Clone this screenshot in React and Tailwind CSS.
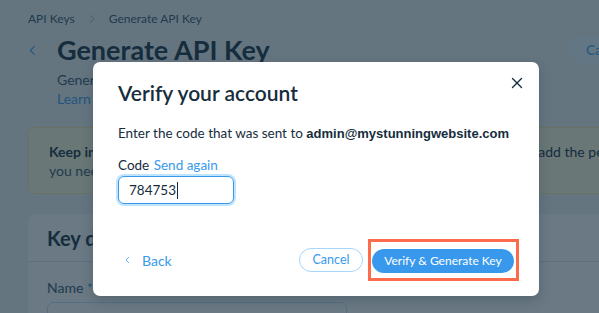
import React from 'react';

const Chevron = ({ dir = 'right', className = '' }) => (
  <svg viewBox="0 0 8 12" className={className} fill="none" stroke="currentColor" strokeWidth="1.3" strokeLinecap="round" strokeLinejoin="round">
    {dir === 'right' ? <path d="M2 1.5 L6.5 6 L2 10.5" /> : <path d="M6 1.5 L1.5 6 L6 10.5" />}
  </svg>
);

const App = () => {
  return (
    <div className="relative w-[599px] h-[313px] overflow-hidden bg-[#f0f4f7] text-[#162d3d] font-['Lato','Liberation_Sans',sans-serif]">
      {/* page underneath */}
      <div className="w-[760px] pl-[28px] pt-[11px]">
        <div className="flex items-center text-[12px] leading-[16px] text-[#32536a]">
          <span>API Keys</span>
          <Chevron className="w-[6px] h-[10px] mx-[14px] text-[#9aa8b4]" />
          <span>Generate API Key</span>
        </div>

        <div className="flex mt-[5px]">
          <div className="w-[29px] pt-[13px]">
            <Chevron dir="left" className="w-[7px] h-[11px] ml-[1px] text-[#3899ec]" />
          </div>
          <div className="w-[510px]">
            <h1 className="text-[27px] leading-[36px] font-bold">Generate API Key</h1>
            <p className="mt-[2px] text-[14px] leading-[19px] text-[#32536a] whitespace-nowrap">Generate a new API key to access your site's data.</p>
            <p className="text-[14px] leading-[19px] text-[#3899ec] whitespace-nowrap">Learn more about API keys</p>
          </div>
          <div className="pt-[4px]">
            <button className="h-[27px] px-[19px] rounded-full bg-[#eaf7ff] text-[14px] text-[#3899ec] whitespace-nowrap">Cancel</button>
          </div>
        </div>

        <div className="mt-[19px] h-[67px] rounded-[6px] border border-[#fde9a8] bg-[#fdf8dc] px-[20px] pt-[14px] text-[14px] leading-[19px] whitespace-nowrap">
          <p className="font-bold">Keep in mind: <span className="font-normal">this key is only shown once. Make sure to carefully copy and only add the permissions</span></p>
          <p className="text-[#32536a]">you need before generating it.</p>
        </div>

        <div className="mt-[20px] rounded-t-[8px] bg-white">
          <div className="h-[48px] border-b border-[#dfe5eb] px-[19px] flex items-center">
            <h2 className="text-[20px] font-bold">Key details</h2>
          </div>
          <div className="px-[19px] pt-[17px]">
            <p className="text-[14px] leading-[18px] text-[#32536a]">Name <span className="text-[#3899ec]">*</span></p>
            <div className="mt-[5px] h-[34px] w-[300px] rounded-[6px] border border-[#c1e4fe] px-[12px] text-[14px] leading-[32px]">Test key</div>
          </div>
        </div>
      </div>

      {/* overlay + modal */}
      <div className="absolute inset-0 bg-[#162d3d]/[0.64] pl-[93px] pt-[62px]">
        <div className="relative w-[446px] h-[234px] rounded-[7px] bg-white px-[25px] pt-[17px] shadow-[0_4px_12px_rgba(22,45,61,0.25)]">
          <button className="absolute right-[16px] top-[15px] w-[12px] h-[12px] text-[#162d3d]">
            <svg viewBox="0 0 12 12" className="w-[12px] h-[12px]" stroke="currentColor" strokeWidth="1.4" strokeLinecap="round">
              <path d="M1.5 1.5 L10.5 10.5 M10.5 1.5 L1.5 10.5" />
            </svg>
          </button>

          <h3 className="text-[21px] leading-[28px] font-semibold">Verify your account</h3>

          <p className="mt-[16px] text-[13.5px] leading-[20px] whitespace-nowrap">
            Enter the code that was sent to{' '}
            <span className="font-['Liberation_Sans',sans-serif] text-[13px] font-bold">admin@mystunningwebsite.com</span>
          </p>

          <p className="mt-[11px] text-[13.5px] leading-[20px]">
            Code <span className="ml-[1px] text-[#3899ec]">Send again</span>
          </p>

          <div className="mt-[1px] w-[116px] h-[28px] rounded-[6px] border border-[#3899ec] shadow-[0_0_0_2px_#c1e4fe] flex items-center pl-[10px] text-[13.5px]">
            <span>784753</span>
            <span className="ml-[1px] w-px h-[17px] bg-[#162d3d]" />
          </div>

          <div className="mt-[43px] flex items-center">
            <button className="flex items-center pl-[7px] text-[14px] text-[#3899ec]">
              <Chevron dir="left" className="w-[5px] h-[8px]" />
              <span className="ml-[12px]">Back</span>
            </button>
            <div className="ml-auto flex items-center gap-[9px]">
              <button className="h-[24px] w-[64px] rounded-full border border-[#a6d6fb] text-[12.5px] text-[#3899ec]">Cancel</button>
              <div className="relative">
                <button className="h-[24px] w-[142px] rounded-full bg-[#3899ec] text-[12px] text-white">Verify &amp; Generate Key</button>
                <span className="absolute -left-[4px] -right-[5px] -top-[8px] -bottom-[8px] border-[3px] border-[#fb6b4c]" />
              </div>
            </div>
          </div>
        </div>
      </div>
    </div>
  );
};

export default App;
